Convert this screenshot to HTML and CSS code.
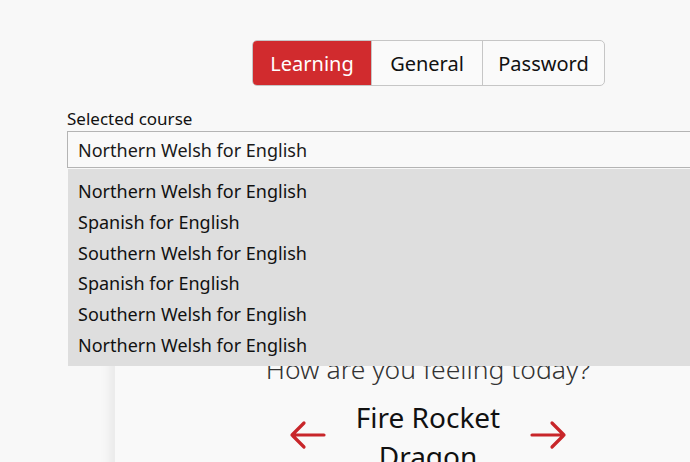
FILE: index.html
```html
<!DOCTYPE html>
<html>
<head>
<meta charset="utf-8">
<link rel="stylesheet" href="styles.css">
</head>
<body>
<div class="page">
  <div class="tabs">
    <div class="tab active">Learning</div>
    <div class="tab">General</div>
    <div class="tab">Password</div>
  </div>
  <div class="field">
    <label class="label">Selected course</label>
    <div class="select-wrap">
      <div class="select">Northern Welsh for English</div>
      <ul class="dropdown">
        <li>Northern Welsh for English</li>
        <li>Spanish for English</li>
        <li>Southern Welsh for English</li>
        <li>Spanish for English</li>
        <li>Southern Welsh for English</li>
        <li>Northern Welsh for English</li>
      </ul>
    </div>
  </div>
  <div class="card">
    <h2 class="question">How are you feeling today?</h2>
    <div class="picker">
      <svg class="arrow" width="38" height="30" viewBox="0 0 38 30"><path d="M36 15H4M16 3L4 15l12 12" fill="none" stroke="#c8262a" stroke-width="3.2" stroke-linecap="round" stroke-linejoin="round"/></svg>
      <div class="choice">Fire Rocket Dragon</div>
      <svg class="arrow" width="38" height="30" viewBox="0 0 38 30"><path d="M2 15h32M22 3l12 12-12 12" fill="none" stroke="#c8262a" stroke-width="3.2" stroke-linecap="round" stroke-linejoin="round"/></svg>
    </div>
  </div>
</div>
</body>
</html>
```
FILE: styles.css
```css
html, body {
  margin: 0;
  padding: 0;
  background: #f8f8f8;
  font-family: "Noto Sans", "Open Sans", sans-serif;
  color: #1a1a1a;
  overflow: hidden;
}
.page {
  width: 690px;
  height: 462px;
  overflow: hidden;
  display: flex;
  flex-direction: column;
}
.page > * {
  flex-shrink: 0;
}
.tabs {
  display: flex;
  margin: 40px 0 0 252px;
  width: 353px;
  height: 46px;
  box-sizing: border-box;
  border: 1px solid #c6c6c6;
  border-radius: 5px;
  overflow: hidden;
  background: #fafafa;
}
.tab {
  display: flex;
  align-items: center;
  justify-content: center;
  font-size: 20px;
  color: #111;
  border-left: 1px solid #c6c6c6;
}
.tab:nth-child(1) { width: 118px; border-left: none; }
.tab:nth-child(2) { width: 110px; }
.tab:nth-child(3) { flex: 1; }
.tab.active {
  background: #d12b2e;
  color: #fff;
}
.field {
  margin: 21px 0 0 67px;
  display: flex;
  flex-direction: column;
}
.label {
  font-size: 17px;
  line-height: 24px;
  color: #111;
}
.select-wrap {
  position: relative;
}
.select {
  height: 37px;
  box-sizing: border-box;
  border: 1px solid #b4b4b4;
  border-right: none;
  background: #f9f9f9;
  padding-left: 10px;
  display: flex;
  align-items: center;
  font-size: 18px;
}
.dropdown {
  position: absolute;
  top: 38px;
  left: 1px;
  right: 0;
  margin: 0;
  padding: 7px 0 5px 10px;
  list-style: none;
  background: #dedede;
  z-index: 2;
}
.dropdown li {
  font-size: 18px;
  line-height: 30.8px;
  color: #111;
}
.card {
  margin: 20px 0 0 115px;
  width: 626px;
  height: 400px;
  background: #f9f9f9;
  box-shadow: -6px 0 10px rgba(0,0,0,0.06);
  display: flex;
  flex-direction: column;
  align-items: center;
  padding-top: 164px;
}
.question {
  margin: 0;
  font-weight: 300;
  font-size: 26.5px;
  line-height: 35px;
  color: #333;
}
.picker {
  display: flex;
  align-items: center;
  gap: 17px;
  margin-top: 11px;
}
.choice {
  width: 170px;
  text-align: center;
  font-size: 28px;
  line-height: 39px;
  color: #111;
}
.arrow {
  display: block;
  margin-bottom: 4px;
}
```
